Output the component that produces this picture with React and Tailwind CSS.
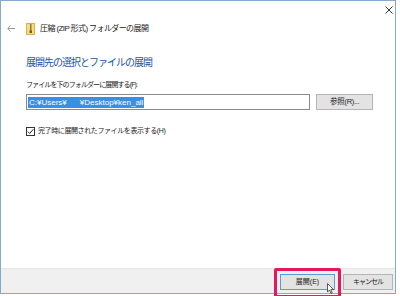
import React from "react";

const jp = "font-['Liberation_Sans','Noto_Sans_CJK_JP',sans-serif]";

function ZipFolderIcon() {
  return (
    <svg width="9" height="12" viewBox="0 0 9 12">
      <rect x="0.5" y="0.5" width="8" height="11" fill="#f7dc7a" stroke="#d8b24a" />
      <rect x="4" y="1" width="1.5" height="7" fill="#8a7a55" />
      <rect x="3.5" y="7.5" width="2.5" height="2.5" fill="#6b5c3a" />
    </svg>
  );
}

export default function App() {
  return (
    <div className={`relative w-[400px] h-[296px] bg-white overflow-hidden ${jp}`}>
      <div className="w-[396px] h-[294px] border border-[#86aacb] flex flex-col bg-white">
        {/* close button row */}
        <div className="h-[18px] flex items-center justify-end pr-[2px]">
          <svg width="8" height="8" viewBox="0 0 8 8" stroke="#333" strokeWidth="1">
            <path d="M0.5 0.5 L7.5 7.5 M7.5 0.5 L0.5 7.5" />
          </svg>
        </div>

        {/* title row */}
        <div className="h-[19px] flex items-center pl-[6px]">
          <svg width="8" height="7" viewBox="0 0 8 7" stroke="#9a9a9a" strokeWidth="1" fill="none">
            <path d="M8 3.5 H1 M3.5 0.5 L0.8 3.5 L3.5 6.5" />
          </svg>
          <div className="ml-[11px]">
            <ZipFolderIcon />
          </div>
          <span className="ml-[5px] text-[8px] tracking-[-0.6px] leading-none text-[#1a1a1a]">
            圧縮 (ZIP 形式) フォルダーの展開
          </span>
        </div>

        {/* content */}
        <div className="flex-1 pl-[25px] pr-[22px]">
          <div className="mt-[17px] text-[10px] tracking-[-1px] leading-[16px] text-[#2352a6]">
            展開先の選択とファイルの展開
          </div>
          <div className="mt-[8px] text-[7px] tracking-[-0.9px] leading-[12px] text-[#1a1a1a]">
            ファイルを下のフォルダーに展開する(F):
          </div>
          <div className="mt-[3px] flex items-center gap-[6px]">
            <div className="w-[286px] h-[16px] border border-[#8a8a8a] bg-white flex items-center pl-[1px]">
              <span className="bg-[#3a8ee6] text-white text-[8px] leading-[11px] px-[1px] whitespace-pre">
                C:¥Users¥<span className="inline-block w-[13px]" />¥Desktop¥ken_all
              </span>
            </div>
            <div className="w-[57px] h-[16px] border border-[#b5b5b5] bg-[#e3e3e3] flex items-center justify-center text-[7.5px] tracking-[-0.3px] text-[#222]">
              参照(R)...
            </div>
          </div>
          <div className="mt-[15px] flex items-center gap-[3px]">
            <div className="w-[9px] h-[9px] border border-[#333] bg-white flex items-center justify-center">
              <svg width="7" height="7" viewBox="0 0 7 7" fill="none" stroke="#222" strokeWidth="1">
                <path d="M0.8 3.6 L2.7 5.5 L6.3 1.2" />
              </svg>
            </div>
            <span className="text-[7px] tracking-[-0.4px] leading-[12px] text-[#1a1a1a]">
              完了時に展開されたファイルを表示する(H)
            </span>
          </div>
        </div>

        {/* footer */}
        <div className="h-[25px] bg-[#f0f0f0] border-t border-[#e4e4e4] flex items-start justify-end gap-[8px] pt-[5px] pr-[2px]">
          <div className="w-[55px] h-[16px] border border-[#5b9bd8] bg-[#e3e3e3] flex items-center justify-center text-[7px] text-[#222]">
            展開(E)
          </div>
          <div className="w-[50px] h-[16px] border border-[#b5b5b5] bg-[#e3e3e3] flex items-center justify-center text-[7px] tracking-[-1px] text-[#222]">
            キャンセル
          </div>
        </div>
      </div>

      {/* red highlight annotation */}
      <div className="absolute left-[274px] top-[268px] w-[67px] h-[30px] border-[3px] border-[#e2195c] rounded-[2px]" />

      {/* mouse cursor */}
      <svg className="absolute left-[327px] top-[283px]" width="7" height="11" viewBox="0 0 7 11">
        <path d="M0.5 0.5 L0.5 9 L2.5 7 L4 10.5 L5.2 10 L3.8 6.6 L6.5 6.6 Z" fill="#fff" stroke="#333" strokeWidth="0.8" />
      </svg>
    </div>
  );
}
